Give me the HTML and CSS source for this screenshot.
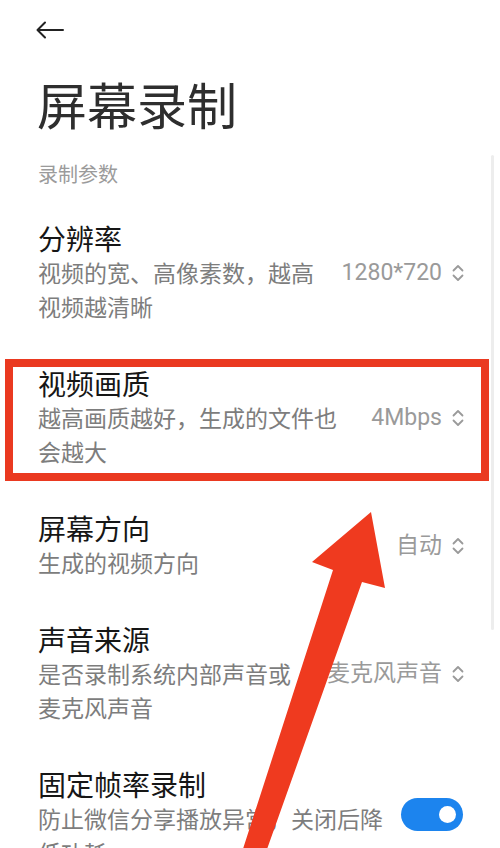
FILE: index.html
```html
<!DOCTYPE html>
<html lang="zh-CN">
<head>
<meta charset="utf-8">
<title>屏幕录制</title>
<link rel="stylesheet" href="styles.css">
</head>
<body>
<div class="page">
  <header class="header">
    <svg class="back" width="28" height="18" viewBox="0 0 28 18" aria-hidden="true">
      <path d="M27 9 H2 M9 1.5 L1.5 9 L9 16.5" fill="none" stroke="#222" stroke-width="2" stroke-linecap="round" stroke-linejoin="round"/>
    </svg>
  </header>
  <h1 class="title">屏幕录制</h1>
  <div class="section-label">录制参数</div>

  <div class="list">
    <div class="item">
      <div class="text">
        <div class="item-title">分辨率</div>
        <div class="item-sub">视频的宽、高像素数，越高视频越清晰</div>
      </div>
      <div class="value"><span>1280*720</span>
        <svg class="chev" width="12" height="20" viewBox="0 0 12 20"><path d="M1.5 7.5 L6 3 L10.5 7.5 M1.5 12.5 L6 17 L10.5 12.5" fill="none" stroke="#9a9a9a" stroke-width="1.8" stroke-linecap="round" stroke-linejoin="round"/></svg>
      </div>
    </div>

    <div class="item highlighted">
      <div class="text">
        <div class="item-title">视频画质</div>
        <div class="item-sub">越高画质越好，生成的文件也会越大</div>
      </div>
      <div class="value"><span>4Mbps</span>
        <svg class="chev" width="12" height="20" viewBox="0 0 12 20"><path d="M1.5 7.5 L6 3 L10.5 7.5 M1.5 12.5 L6 17 L10.5 12.5" fill="none" stroke="#9a9a9a" stroke-width="1.8" stroke-linecap="round" stroke-linejoin="round"/></svg>
      </div>
      <div class="mark-box"></div>
    </div>

    <div class="item">
      <div class="text">
        <div class="item-title">屏幕方向</div>
        <div class="item-sub">生成的视频方向</div>
      </div>
      <div class="value"><span>自动</span>
        <svg class="chev" width="12" height="20" viewBox="0 0 12 20"><path d="M1.5 7.5 L6 3 L10.5 7.5 M1.5 12.5 L6 17 L10.5 12.5" fill="none" stroke="#9a9a9a" stroke-width="1.8" stroke-linecap="round" stroke-linejoin="round"/></svg>
      </div>
    </div>

    <div class="item">
      <div class="text">
        <div class="item-title">声音来源</div>
        <div class="item-sub">是否录制系统内部声音或麦克风声音</div>
      </div>
      <div class="value"><span>麦克风声音</span>
        <svg class="chev" width="12" height="20" viewBox="0 0 12 20"><path d="M1.5 7.5 L6 3 L10.5 7.5 M1.5 12.5 L6 17 L10.5 12.5" fill="none" stroke="#9a9a9a" stroke-width="1.8" stroke-linecap="round" stroke-linejoin="round"/></svg>
      </div>
    </div>

    <div class="item">
      <div class="text">
        <div class="item-title">固定帧率录制</div>
        <div class="item-sub">防止微信分享播放异常，关闭后降低功耗</div>
      </div>
      <div class="toggle on"><span class="knob"></span></div>
    </div>
  </div>

  <div class="scroll-indicator"></div>

  <svg class="annotation-arrow" width="500" height="848" viewBox="0 0 500 848" aria-hidden="true">
    <polygon points="371,512 385,588 362,582 266,852 242,852 333,570 312,562" fill="#ef3a1f"/>
  </svg>
</div>
</body>
</html>
```

FILE: styles.css
```css
html, body {
  margin: 0;
  padding: 0;
  background: #ffffff;
  overflow: hidden;
}

.page {
  position: relative;
  width: 500px;
  height: 848px;
  overflow: hidden;
  font-family: "Noto Sans CJK SC", "Noto Sans", sans-serif;
  color: #1a1a1a;
}

.header {
  height: 58px;
  display: flex;
  align-items: center;
  padding-left: 36px;
  padding-top: 2px;
  box-sizing: border-box;
}

.back {
  display: block;
}

.title {
  margin: 15px 0 0 0;
  padding-left: 37px;
  font-size: 50px;
  line-height: 60px;
  font-weight: 400;
  color: #2e2e2e;
}

.section-label {
  margin: 27px 0 12px 0;
  padding-left: 38px;
  font-size: 20px;
  line-height: 28px;
  color: #9b9b9b;
}

.list {
  display: flex;
  flex-direction: column;
}

.item {
  position: relative;
  display: flex;
  align-items: center;
  gap: 16px;
  padding: 22px 37px 22px 38px;
}

.text {
  flex: 1;
  min-width: 0;
}

.item-title {
  font-size: 28px;
  line-height: 33px;
  color: #161616;
}

.item-sub {
  font-size: 23px;
  line-height: 34px;
  color: #7d7d7d;
}

.value {
  display: flex;
  align-items: center;
  gap: 10px;
  font-family: Roboto, "Noto Sans CJK SC", sans-serif;
  font-size: 23px;
  line-height: 34px;
  color: #9a9a9a;
  white-space: nowrap;
}

.chev {
  display: block;
  margin-right: -1px;
}

.toggle {
  flex: none;
  width: 62px;
  height: 33px;
  border-radius: 17px;
  background: #1c84ee;
  position: relative;
  margin-top: -8px;
}

.knob {
  position: absolute;
  right: 7px;
  top: 8px;
  width: 17px;
  height: 17px;
  border-radius: 50%;
  background: #ffffff;
}

.mark-box {
  position: absolute;
  top: 14px;
  bottom: 9px;
  left: 5px;
  right: 11px;
  border: 8px solid #ea3920;
  pointer-events: none;
}

.scroll-indicator {
  position: absolute;
  left: 491px;
  top: 155px;
  width: 3px;
  height: 475px;
  border-radius: 2px;
  background: #ededed;
}

.annotation-arrow {
  position: absolute;
  left: 0;
  top: 0;
  pointer-events: none;
}
```
